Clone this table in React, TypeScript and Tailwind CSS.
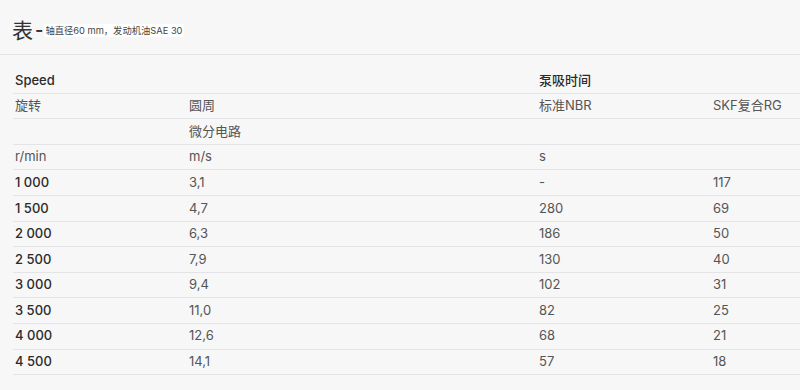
const rows: [string, string, string, string][] = [
  ["1 000", "3,1", "-", "117"],
  ["1 500", "4,7", "280", "69"],
  ["2 000", "6,3", "186", "50"],
  ["2 500", "7,9", "130", "40"],
  ["3 000", "9,4", "102", "31"],
  ["3 500", "11,0", "82", "25"],
  ["4 000", "12,6", "68", "21"],
  ["4 500", "14,1", "57", "18"],
];

const font = { fontFamily: 'Inter, "Noto Sans CJK SC", sans-serif' };

const Row = ({ cells, bold }: { cells: string[]; bold?: boolean }) => (
  <div className="grid grid-cols-[174px_350px_174px_1fr] h-[25.6px] border-b border-[#e4e4e6] items-center">
    {cells.map((c, i) => (
      <div
        key={i}
        className={"pl-[2px] " + (i === 0 && bold ? "font-medium text-[#2b2b2b]" : "text-[#555]")}
      >
        {c}
      </div>
    ))}
  </div>
);

export default function App() {
  return (
    <div className="w-[800px] h-[390px] bg-[#f7f7f7] overflow-hidden text-[13px]" style={font}>
      <div className="h-[55px] border-b border-[#e4e4e6] flex items-center pt-[6px] pl-[12px]">
        <span className="text-[21px] text-[#333] leading-none">表</span>
        <span className="text-[18px] text-[#333] leading-none ml-[2px] font-semibold">-</span>
        <span className="text-[9.3px] text-[#444] bg-white ml-[1px] px-[1px] leading-[13px]">
          轴直径60 mm，发动机油SAE 30
        </span>
      </div>
      <div className="ml-[13px] mt-[13px]">
        <div className="grid grid-cols-[174px_350px_174px_1fr] h-[25.6px] border-b border-[#e4e4e6] items-center font-medium text-[#2b2b2b]">
          <div className="pl-[2px]">Speed</div>
          <div />
          <div className="pl-[2px]">泵吸时间</div>
          <div />
        </div>
        <Row cells={["旋转", "圆周", "标准NBR", "SKF复合RG"]} />
        <Row cells={["", "微分电路", "", ""]} />
        <Row cells={["r/min", "m/s", "s", ""]} />
        {rows.map((r) => (
          <Row key={r[0]} cells={r} bold />
        ))}
      </div>
    </div>
  );
}
